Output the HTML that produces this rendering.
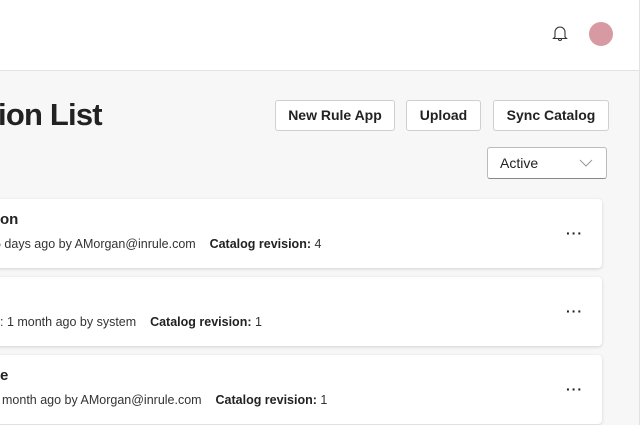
<!DOCTYPE html>
<html><head><style>
body{margin:0;width:640px;height:425px;overflow:hidden;background:#f7f7f7;font-family:"Liberation Sans",sans-serif;color:#222;position:relative}
.hdr{position:absolute;left:0;top:0;width:640px;height:70px;background:#fff;border-bottom:1px solid #e2e2e2}
.rb{position:absolute;right:0;top:0;width:1px;height:425px;background:#e2e2e2}
.av{position:absolute;left:589px;top:22px;width:24px;height:24px;border-radius:50%;background:#d79aa2}
h1{position:absolute;left:-2px;top:97px;margin:0;font-size:31px;font-weight:bold;letter-spacing:-0.8px;color:#222}
.btn{position:absolute;top:100px;height:29px;border:1px solid #cfcfcf;border-radius:3px;background:#fff;font-size:14px;font-weight:bold;line-height:29px;text-align:center;color:#222}
.sel{position:absolute;left:487px;top:147px;width:118px;height:30px;border:1px solid #bbb;border-bottom:1.5px solid #888;border-radius:3px;background:#fff;font-size:14px;line-height:30px}
.card{position:absolute;left:-10px;width:612px;height:69px;background:#fff;border-radius:4px;box-shadow:0 1px 3px rgba(0,0,0,.15)}
.t{position:absolute;top:12px;font-size:15px;font-weight:bold}
.m{position:absolute;top:38px;font-size:12.5px;color:#333;white-space:nowrap}
.m b{color:#222}
.d{position:absolute;left:576px;top:26px;font-size:14px;font-weight:bold;letter-spacing:1px}
</style></head><body>
<div class="hdr">
<svg style="position:absolute;left:552px;top:24px" width="16" height="18" viewBox="0 0 16 18"><path d="M3 13V8a5 5 0 0 1 10 0v5l1.5 1.5h-13z M6.5 15a1.5 1.5 0 0 0 3 0" fill="none" stroke="#333" stroke-width="1.1"/></svg>
<div class="av"></div>
</div>
<div class="rb"></div>
<h1>ion List</h1>
<div class="btn" style="left:275px;width:118px">New Rule App</div>
<div class="btn" style="left:406px;width:73px">Upload</div>
<div class="btn" style="left:493px;width:114px">Sync Catalog</div>
<div class="sel"><span style="position:absolute;left:12px">Active</span>
<svg style="position:absolute;left:91px;top:11px" width="14" height="8"><path d="M1 1l6 6 6-6" fill="none" stroke="#999" stroke-width="1"/></svg></div>
<div class="card" style="top:199px"><div class="t" style="left:10px">on</div><div class="m" style="left:4px">5 days ago by AMorgan@inrule.com &nbsp;&nbsp; <b>Catalog revision:</b> 4</div><div class="d">···</div></div>
<div class="card" style="top:277px"><div class="m" style="left:10px">: 1 month ago by system &nbsp;&nbsp; <b>Catalog revision:</b> 1</div><div class="d">···</div></div>
<div class="card" style="top:355px"><div class="t" style="left:10px">e</div><div class="m" style="left:12px">month ago by AMorgan@inrule.com &nbsp;&nbsp; <b>Catalog revision:</b> 1</div><div class="d">···</div></div>
</body></html>
